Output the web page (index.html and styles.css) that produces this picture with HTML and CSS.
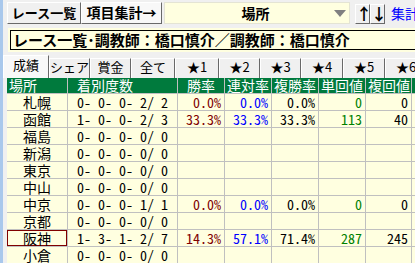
FILE: index.html
```html
<!DOCTYPE html>
<html lang="ja">
<head>
    <meta charset="UTF-8">
    <title>レース一覧 - 場所別集計</title>
    <link rel="stylesheet" href="styles.css">
</head>
<body>
<div class="app">
    <div class="edge"></div>
    <div class="main">
        <div class="toolbar">
            <div class="btn btn-list">レース一覧</div>
            <div class="btn btn-sum">項目集計→</div>
            <div class="combo">
                <span class="combo-label">場所</span>
                <span class="combo-arrow"></span>
            </div>
            <div class="btn btn-sort up">↑</div>
            <div class="btn btn-sort">↓</div>
            <span class="link">集計</span>
        </div>

        <div class="title-wrap">
            <div class="title">レース一覧･調教師：橋口慎介／調教師：橋口慎介</div>
        </div>

        <div class="tabs">
            <div class="tab first on">成績</div>
            <div class="tab">シェア</div>
            <div class="tab">賞金</div>
            <div class="tab wide">全て</div>
            <div class="tab wide">★1</div>
            <div class="tab">★2</div>
            <div class="tab">★3</div>
            <div class="tab mid">★4</div>
            <div class="tab mid">★5</div>
            <div class="tab mid">★6</div>
        </div>

        <table class="grid">
            <colgroup>
                <col class="c-place"><col class="c-count"><col class="c-rate"><col class="c-rate"><col class="c-rate"><col class="c-rate"><col class="c-last"><col class="c-more">
            </colgroup>
            <tr>
                <th>場所</th><th class="pad">着別度数</th><th class="pad">勝率</th><th>連対率</th><th>複勝率</th><th>単回値</th><th>複回値</th><th></th>
            </tr>
            <tr>
                <td class="place">札幌</td><td class="count">0- 0- 0- 2/ 2</td><td class="num win">0.0%</td><td class="num ren">0.0%</td><td class="num">0.0%</td><td class="num tan">0</td><td class="num">0</td><td></td>
            </tr>
            <tr>
                <td class="place">函館</td><td class="count">1- 0- 0- 2/ 3</td><td class="num win">33.3%</td><td class="num ren">33.3%</td><td class="num">33.3%</td><td class="num tan">113</td><td class="num">40</td><td></td>
            </tr>
            <tr>
                <td class="place">福島</td><td class="count">0- 0- 0- 0/ 0</td><td></td><td></td><td></td><td></td><td></td><td></td>
            </tr>
            <tr>
                <td class="place">新潟</td><td class="count">0- 0- 0- 0/ 0</td><td></td><td></td><td></td><td></td><td></td><td></td>
            </tr>
            <tr>
                <td class="place">東京</td><td class="count">0- 0- 0- 0/ 0</td><td></td><td></td><td></td><td></td><td></td><td></td>
            </tr>
            <tr>
                <td class="place">中山</td><td class="count">0- 0- 0- 0/ 0</td><td></td><td></td><td></td><td></td><td></td><td></td>
            </tr>
            <tr>
                <td class="place">中京</td><td class="count">0- 0- 0- 1/ 1</td><td class="num win">0.0%</td><td class="num ren">0.0%</td><td class="num">0.0%</td><td class="num tan">0</td><td class="num">0</td><td></td>
            </tr>
            <tr>
                <td class="place">京都</td><td class="count">0- 0- 0- 0/ 0</td><td></td><td></td><td></td><td></td><td></td><td></td>
            </tr>
            <tr>
                <td class="place sel">阪神</td><td class="count">1- 3- 1- 2/ 7</td><td class="num win">14.3%</td><td class="num ren">57.1%</td><td class="num">71.4%</td><td class="num tan">287</td><td class="num">245</td><td></td>
            </tr>
            <tr>
                <td class="place">小倉</td><td class="count">0- 0- 0- 0/ 0</td><td></td><td></td><td></td><td></td><td></td><td></td>
            </tr>
        </table>
    </div>
</div>
</body>
</html>
```

FILE: styles.css
```css
body {
    margin: 0;
    width: 415px;
    height: 263px;
    overflow: hidden;
    background-color: #f0f0f0;
    font-family: "Noto Sans CJK JP", sans-serif;
    color: #000;
}
.app {
    display: flex;
    height: 263px;
}
.edge {
    flex: none;
    width: 3px;
    background-color: #a9c8ec;
}
.main {
    flex: 1;
    min-width: 0;
    overflow: hidden;
}

/* toolbar */
.toolbar {
    display: flex;
    align-items: flex-start;
    height: 28px;
    padding: 2px 0 0 4px;
    box-sizing: border-box;
    white-space: nowrap;
}
.btn {
    flex: none;
    height: 22px;
    box-sizing: border-box;
    border: 1px solid;
    border-color: #fff #696969 #696969 #fff;
    background-color: #f0f0f0;
    font-size: 13px;
    font-weight: bold;
    line-height: 19px;
    text-align: center;
}
.btn-list {
    width: 74px;
}
.btn-sum {
    width: 81px;
    font-size: 14px;
    background-color: #f8f8f8;
}
.combo {
    flex: none;
    display: flex;
    align-items: center;
    width: 186px;
    height: 22px;
    margin-left: 2px;
    box-sizing: border-box;
    border: 1px solid #e4e4d4;
    background-color: #ffffe0;
}
.combo-label {
    flex: 1;
    text-align: center;
    font-size: 14px;
    font-weight: bold;
    padding-left: 12px;
}
.combo-arrow {
    width: 0;
    height: 0;
    margin-right: 3px;
    border-top: 7px solid #808080;
    border-left: 6px solid transparent;
    border-right: 6px solid transparent;
}
.btn-sort {
    width: 15px;
    height: 20px;
    margin-top: 2px;
    line-height: 17px;
    font-size: 16px;
}
.btn-sort.up {
    margin-left: 5px;
}
.link {
    margin-left: 6px;
    color: #0000ff;
    font-size: 14px;
    line-height: 22px;
}

/* title */
.title-wrap {
    margin-left: 5px;
    height: 24px;
    padding: 2px 0 2px 2px;
    box-sizing: border-box;
    background-color: #ffffe0;
}
.title {
    height: 20px;
    box-sizing: border-box;
    border: 1px solid #000;
    border-right: none;
    padding-left: 2px;
    font-size: 15px;
    font-weight: bold;
    line-height: 18px;
    white-space: nowrap;
}

/* tabs */
.tabs {
    display: flex;
    align-items: flex-end;
    height: 26px;
    white-space: nowrap;
}
.tab {
    flex: none;
    width: 41px;
    height: 20px;
    box-sizing: border-box;
    border-left: 1px solid #fff;
    border-top: 1px solid #fff;
    border-right: 1px solid #696969;
    font-size: 13px;
    line-height: 16px;
    text-align: center;
}
.tab.first {
    width: 46px;
}
.tab.wide {
    width: 44px;
}
.tab.mid {
    width: 42px;
}
.tab.on {
    height: 23px;
    background-color: #f8f8f8;
    line-height: 18px;
}

/* grid */
.grid {
    margin-left: 4px;
    width: 448px;
    table-layout: fixed;
    border-collapse: separate;
    border-spacing: 0;
}
.c-place { width: 61px; }
.c-count { width: 110px; }
.c-rate { width: 47px; }
.c-last { width: 46px; }
.c-more { width: 43px; }
.grid th {
    height: 16px;
    padding: 0 0 0 2px;
    box-sizing: border-box;
    border-right: 1px solid #c0c0c0;
    border-bottom: 1px solid #c0c0c0;
    background-color: #007a3d;
    color: #fff;
    font-size: 14px;
    font-weight: normal;
    line-height: 15px;
    text-align: left;
    white-space: nowrap;
    overflow: hidden;
}
.grid th.pad {
    padding-left: 9px;
}
.grid td {
    height: 17px;
    padding: 0 3px;
    box-sizing: border-box;
    border-right: 1px solid #c0c0c0;
    border-bottom: 1px solid #c0c0c0;
    background-color: #ffffe0;
    font-size: 14px;
    line-height: 16px;
    white-space: pre;
    overflow: hidden;
}
.grid td.place {
    text-align: center;
}
.grid td.sel {
    box-shadow: inset 0 0 0 1px #800000;
}
.count, .num {
    font-feature-settings: "hwid";
}
.count {
    text-align: center;
}
.num {
    text-align: right;
}
.win { color: #800000; }
.ren { color: #0000ff; }
.tan { color: #008000; }
```
